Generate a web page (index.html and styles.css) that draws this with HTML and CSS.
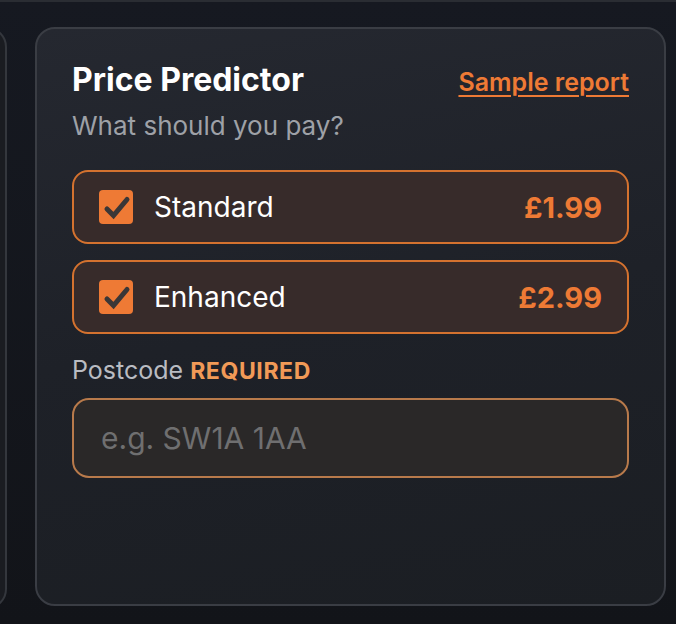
FILE: index.html
```html
<!DOCTYPE html>
<html lang="en">
<head>
<meta charset="utf-8">
<title>Price Predictor</title>
<link rel="stylesheet" href="styles.css">
</head>
<body>
<div class="page">
  <div class="clip">
    <div class="side-card"></div>
  </div>
  <section class="card">
    <header class="card-head">
      <h2 class="title">Price Predictor</h2>
      <a class="sample" href="#">Sample report</a>
    </header>
    <p class="subtitle">What should you pay?</p>
    <div class="options">
      <label class="option">
        <span class="check">
          <svg viewBox="0 0 34 34" width="34" height="34"><path d="M8 19 L14.5 25.5 L28 9.5" fill="none" stroke="#3a3737" stroke-width="5" stroke-linecap="round" stroke-linejoin="miter"/></svg>
        </span>
        <span class="opt-name">Standard</span>
        <span class="opt-price">£1.99</span>
      </label>
      <label class="option">
        <span class="check">
          <svg viewBox="0 0 34 34" width="34" height="34"><path d="M8 19 L14.5 25.5 L28 9.5" fill="none" stroke="#3a3737" stroke-width="5" stroke-linecap="round" stroke-linejoin="miter"/></svg>
        </span>
        <span class="opt-name">Enhanced</span>
        <span class="opt-price">£2.99</span>
      </label>
    </div>
    <div class="field-label">Postcode <span class="req">REQUIRED</span></div>
    <div class="input"><span class="placeholder">e.g. SW1A 1AA</span></div>
  </section>
</div>
</body>
</html>
```

FILE: styles.css
```css
html, body {
  margin: 0;
  padding: 0;
}
body {
  width: 676px;
  height: 624px;
  overflow: hidden;
  background: linear-gradient(180deg, #161921 0%, #121419 100%);
  font-family: Inter, "Noto Sans", sans-serif;
  border-top: 2px solid #2a2d33;
  box-sizing: border-box;
}
.page {
  display: flex;
  gap: 28px;
  padding-top: 25px;
  height: 580px;
}
.clip {
  width: 7px;
  overflow: hidden;
  display: flex;
  justify-content: flex-end;
  flex-shrink: 0;
}
.side-card {
  flex-shrink: 0;
  width: 300px;
  height: 578px;
  border: 2px solid #34373d;
  border-radius: 20px;
  background: #1a1c21;
}
.card {
  box-sizing: border-box;
  width: 631px;
  height: 579px;
  border: 2px solid #3a3d44;
  border-radius: 20px;
  background: linear-gradient(170deg, #252830 0%, #1e2128 50%, #1b1e23 100%);
  padding: 31px 35px 0 35px;
}
.card-head {
  display: flex;
  justify-content: space-between;
  align-items: baseline;
}
.title {
  margin: 0;
  color: #ffffff;
  font-size: 32px;
  font-weight: 700;
  line-height: 40px;
}
.sample {
  color: #ee7a35;
  font-size: 25px;
  font-weight: 600;
  text-decoration: underline;
  text-decoration-thickness: 2px;
  text-underline-offset: 4px;
}
.subtitle {
  margin: 9px 0 0 0;
  color: #9ea1a7;
  font-size: 26px;
  line-height: 34px;
}
.options {
  display: flex;
  flex-direction: column;
  gap: 16px;
  margin-top: 27px;
}
.option {
  box-sizing: border-box;
  height: 74px;
  display: flex;
  align-items: center;
  border: 2px solid #d4722f;
  border-radius: 16px;
  background: #372b2a;
  padding: 0 25px;
}
.check {
  width: 34px;
  height: 34px;
  background: #ee7a35;
  border-radius: 4px;
  display: flex;
  flex-shrink: 0;
}
.opt-name {
  margin-left: 21px;
  color: #ffffff;
  font-size: 28px;
  font-weight: 400;
}
.opt-price {
  margin-left: auto;
  color: #ee7a35;
  font-size: 29px;
  font-weight: 700;
}
.field-label {
  margin-top: 19px;
  color: #b9bcc2;
  font-size: 25px;
  line-height: 34px;
}
.req {
  color: #f19a57;
  font-weight: 700;
  letter-spacing: 0.6px;
  font-size: 23px;
}
.input {
  box-sizing: border-box;
  margin-top: 10px;
  height: 80px;
  border: 2px solid #b87a4b;
  border-radius: 17px;
  background: #2a2828;
  display: flex;
  align-items: center;
  padding: 0 27px;
}
.placeholder {
  color: #6f6f70;
  font-size: 30px;
}
```
